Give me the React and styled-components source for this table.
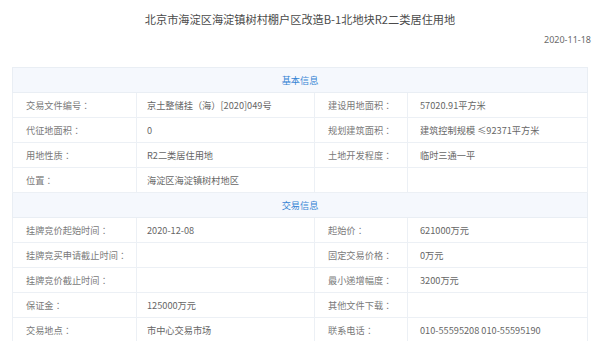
import React from "react";
import styled, { createGlobalStyle } from "styled-components";

const Global = createGlobalStyle`
  html, body { margin: 0; padding: 0; background: #fff; }
  body { font-family: "Noto Sans CJK SC", "Noto Sans", sans-serif; }
`;

const Page = styled.div`
  width: 600px;
  height: 341px;
  overflow: hidden;
  display: flex;
  flex-direction: column;
`;

const Title = styled.h1`
  margin: 0;
  padding-top: 9px;
  font-size: 11.2px;
  line-height: 20px;
  font-weight: 400;
  color: #4a4a4a;
  text-align: center;
`;

const DateLine = styled.div`
  padding: 1px 9px 0 0;
  font-size: 9px;
  line-height: 20px;
  color: #6a6a6a;
  text-align: right;
  font-family: "Noto Sans", "Noto Sans CJK SC", sans-serif;
`;

const Table = styled.table`
  margin: 17px 13px 0 12px;
  width: 575px;
  border-collapse: collapse;
  table-layout: fixed;
  font-size: 9.2px;
  color: #666;
`;

const Row = styled.tr`
  height: 25px;
`;

const SectionCell = styled.th`
  height: 24px;
  padding: 0;
  background: #f5f8fd;
  border: 1px solid #e9eef4;
  color: #3584d4;
  font-weight: 400;
  text-align: center;
  font-size: 9.2px;
`;

const Cell = styled.td`
  height: 24px;
  padding: 0 0 0 ${(p) => p.$pad}px;
  border: 1px solid #ecf0f5;
  color: ${(p) => (p.$label ? "#7a7a7a" : "#666")};
  font-family: ${(p) =>
    p.$label
      ? '"Noto Sans CJK TC", "Noto Sans CJK SC", sans-serif'
      : '"Noto Sans CJK SC", "Noto Sans", sans-serif'};
  white-space: nowrap;
  overflow: hidden;
`;

const sections = [
  {
    title: "基本信息",
    rows: [
      ["交易文件编号：", "京土整储挂（海）[2020]049号", "建设用地面积：", "57020.91平方米"],
      ["代征地面积：", "0", "规划建筑面积：", "建筑控制规模 ≤92371平方米"],
      ["用地性质：", "R2二类居住用地", "土地开发程度：", "临时三通一平"],
      ["位置：", "海淀区海淀镇树村地区", "", ""],
    ],
  },
  {
    title: "交易信息",
    rows: [
      ["挂牌竞价起始时间：", "2020-12-08", "起始价：", "621000万元"],
      ["挂牌竞买申请截止时间：", "", "固定交易价格：", "0万元"],
      ["挂牌竞价截止时间：", "", "最小递增幅度：", "3200万元"],
      ["保证金：", "125000万元", "其他文件下载：", ""],
      ["交易地点：", "市中心交易市场", "联系电话：", "010-55595208 010-55595190"],
    ],
  },
];

const pads = [13, 10, 13, 12];

export default function App() {
  return (
    <Page>
      <Global />
      <Title>北京市海淀区海淀镇树村棚户区改造B-1北地块R2二类居住用地</Title>
      <DateLine>2020-11-18</DateLine>
      <Table>
        <colgroup>
          <col style={{ width: 124 }} />
          <col style={{ width: 178 }} />
          <col style={{ width: 93 }} />
          <col style={{ width: 180 }} />
        </colgroup>
        <tbody>
          {sections.map((s) => (
            <React.Fragment key={s.title}>
              <Row>
                <SectionCell colSpan={4}>{s.title}</SectionCell>
              </Row>
              {s.rows.map((r, i) => (
                <Row key={i}>
                  {r.map((c, j) => (
                    <Cell key={j} $label={j % 2 === 0} $pad={pads[j]}>
                      {c}
                    </Cell>
                  ))}
                </Row>
              ))}
            </React.Fragment>
          ))}
        </tbody>
      </Table>
    </Page>
  );
}
